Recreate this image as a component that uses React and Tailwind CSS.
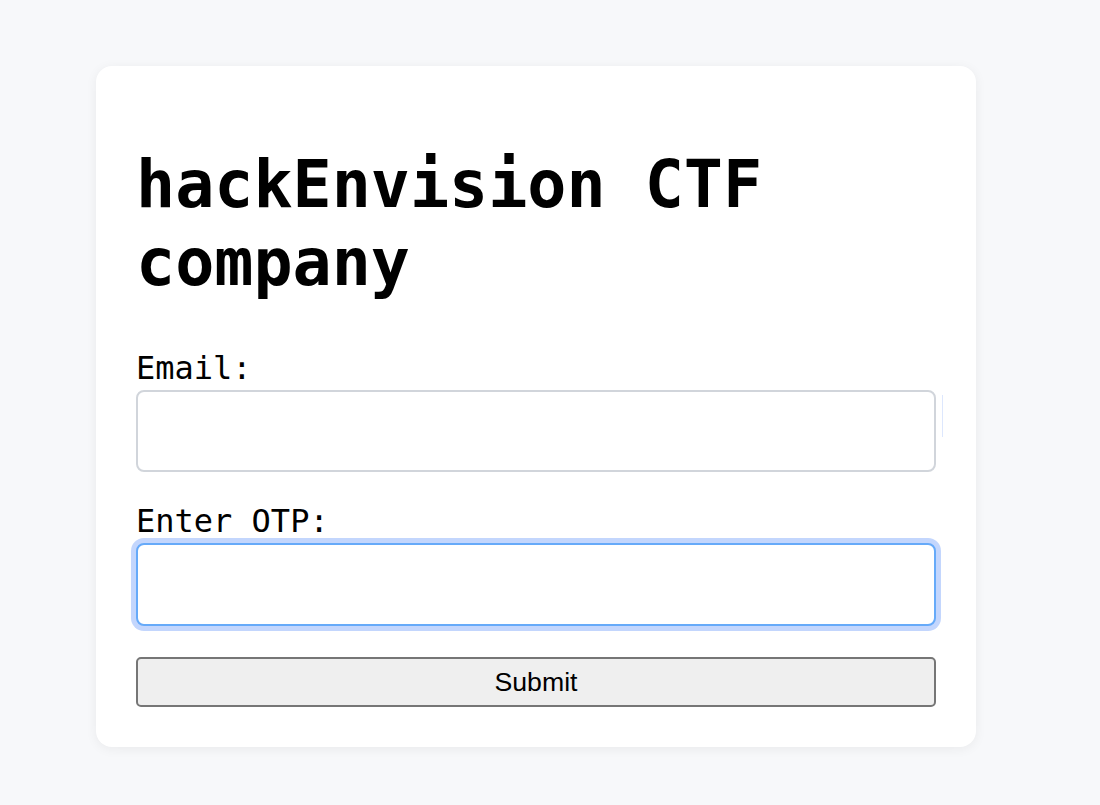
import React from 'react';

const mono = { fontFamily: '"DejaVu Sans Mono", "Liberation Mono", monospace' };

export default function App() {
  return (
    <div className="min-h-[805px] bg-[#f7f8fa] pt-[66px] pl-24">
      <div className="w-[880px] rounded-2xl bg-white px-10 pt-10 pb-10 shadow-[0_2px_12px_rgba(0,0,0,0.06)]">
        <h1
          className="mt-10 mb-[46px] text-[65px] leading-[78px] font-bold text-black"
          style={mono}
        >
          hackEnvision CTF company
        </h1>

        <form onSubmit={(e) => e.preventDefault()}>
          <label
            htmlFor="email"
            className="block text-[32px] leading-10 text-black font-[family-name:'DejaVu_Sans_Mono',monospace]"
          >
            Email:
          </label>
          <div className="relative mt-0.5">
            <input
              id="email"
              type="email"
              className="block h-[82px] w-[800px] rounded-lg border-2 border-[#d1d5db] bg-white px-3 text-[32px] outline-none"
            />
            <div className="absolute top-[5px] left-[806px] h-[42px] w-px bg-[#dde7fd]" />
          </div>

          <label
            htmlFor="otp"
            className="mt-[29px] block text-[32px] leading-10 text-black font-[family-name:'DejaVu_Sans_Mono',monospace]"
          >
            Enter OTP:
          </label>
          <input
            id="otp"
            type="text"
            className="mt-0.5 block h-[83px] w-[800px] rounded-lg border-2 border-[#66aaf9] bg-white px-3 text-[32px] outline-none shadow-[0_0_0_5px_#c3d6fd]"
          />

          <button
            type="submit"
            className="mt-[31px] block h-[50px] w-[800px] rounded-[5px] border-2 border-[#767676] bg-[#efefef] text-[26.67px] text-black font-[family-name:'Liberation_Sans',Arial,sans-serif]"
          >
            Submit
          </button>
        </form>
      </div>
    </div>
  );
}
